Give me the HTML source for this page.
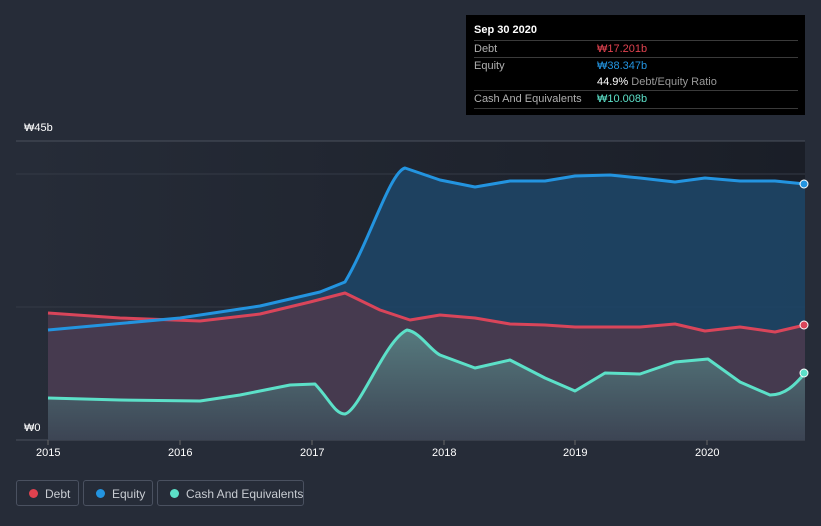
<!DOCTYPE html><html><head><meta charset="utf-8"><style>
html,body{margin:0;width:821px;height:526px;overflow:hidden}
body{background:#262c38;font-family:"Liberation Sans","Noto Sans CJK KR",sans-serif;position:relative}
.t{position:absolute;color:#fff;font-size:11px;white-space:nowrap}
.tip{position:absolute;left:466px;top:15px;width:339px;height:100px;background:#000}
.row{position:absolute;left:8px;width:324px;border-top:1px solid #3a3a3a;font-size:11px;color:#b0b0b0;white-space:nowrap}
.lg{position:absolute;top:480px;height:26px;border:1px solid #4a5160;border-radius:3px;color:#c8ccd2;font-size:12px;line-height:26px;box-sizing:border-box;white-space:nowrap}
.lg i{position:absolute;left:12px;top:8px;width:9px;height:9px;border-radius:50%}
</style></head><body>
<svg width="821" height="526" style="position:absolute;left:0;top:0">
<defs>
<linearGradient id="bgG" x1="0" x2="1" y1="0" y2="0"><stop offset="0" stop-color="#262c38"/><stop offset="1" stop-color="#1a1e27"/></linearGradient>
<linearGradient id="cG" x1="0" x2="0" y1="0" y2="1"><stop offset="0" stop-color="#5a8a8a" stop-opacity=".8"/><stop offset="1" stop-color="#3a4755" stop-opacity=".8"/></linearGradient>
</defs>
<rect x="16" y="141" width="789" height="299" fill="url(#bgG)"/>
<line x1="16" y1="141" x2="805" y2="141" stroke="#4a505c"/>
<line x1="16" y1="174" x2="805" y2="174" stroke="#343a46"/>
<line x1="16" y1="307" x2="805" y2="307" stroke="#343a46"/>
<line x1="16" y1="440" x2="805" y2="440" stroke="#4a505c"/>
<path d="M48,330 L180,318 L260,306 L320,292 L345,282 C370,240 390,172 405,168 L440,180 L475,187 L510,181 L545,181 L575,176 L610,175 L640,178 L675,182 L705,178 L740,181 L775,181 L805,184 L805,440 L48,440Z" fill="#1e4566" opacity=".9"/>
<path d="M48,313 L120,318 L200,321 L260,314 L310,302 L345,293 L380,310 L410,320 L440,315 L475,318 L510,324 L545,325 L575,327 L610,327 L640,327 L675,324 L705,331 L740,327 L775,332 L805,325 L805,440 L48,440Z" fill="#4a3a4e" opacity=".9"/>
<path d="M48,398 L120,400 L200,401 L240,395 L290,385 L315,384 C330,400 335,414 345,414 C360,410 385,340 407,330 C420,332 430,350 440,355 L475,368 L510,360 L545,378 L575,391 L605,373 L640,374 L675,362 L708,359 L740,382 L770,395 C785,395 795,385 805,373 L805,440 L48,440Z" fill="url(#cG)"/>
<g fill="none" stroke-width="3" stroke-linejoin="round">
<path d="M48,313 L120,318 L200,321 L260,314 L310,302 L345,293 L380,310 L410,320 L440,315 L475,318 L510,324 L545,325 L575,327 L610,327 L640,327 L675,324 L705,331 L740,327 L775,332 L805,325" stroke="#d9455a"/>
<path d="M48,330 L180,318 L260,306 L320,292 L345,282 C370,240 390,172 405,168 L440,180 L475,187 L510,181 L545,181 L575,176 L610,175 L640,178 L675,182 L705,178 L740,181 L775,181 L805,184" stroke="#2394e0"/>
<path d="M48,398 L120,400 L200,401 L240,395 L290,385 L315,384 C330,400 335,414 345,414 C360,410 385,340 407,330 C420,332 430,350 440,355 L475,368 L510,360 L545,378 L575,391 L605,373 L640,374 L675,362 L708,359 L740,382 L770,395 C785,395 795,385 805,373" stroke="#5ce0c8"/>
</g>
<circle cx="804" cy="184" r="4" fill="#2394e0" stroke="#fff"/>
<circle cx="804" cy="325" r="4" fill="#d9455a" stroke="#fff"/>
<circle cx="804" cy="373" r="4" fill="#5ce0c8" stroke="#fff"/>
<g stroke="#666"><line x1="48" y1="440" x2="48" y2="445"/><line x1="180" y1="440" x2="180" y2="445"/><line x1="312" y1="440" x2="312" y2="445"/><line x1="444" y1="440" x2="444" y2="445"/><line x1="575" y1="440" x2="575" y2="445"/><line x1="707" y1="440" x2="707" y2="445"/></g>
</svg>
<div class="t" style="left:24px;top:122px">₩45b</div>
<div class="t" style="left:24px;top:422px">₩0</div>
<div class="t" style="left:36px;top:447px">2015</div>
<div class="t" style="left:168px;top:447px">2016</div>
<div class="t" style="left:300px;top:447px">2017</div>
<div class="t" style="left:432px;top:447px">2018</div>
<div class="t" style="left:563px;top:447px">2019</div>
<div class="t" style="left:695px;top:447px">2020</div>
<div class="tip">
<div style="position:absolute;left:8px;top:9px;color:#fff;font-weight:bold;font-size:11px">Sep 30 2020</div>
<div class="row" style="top:25px;height:16px;line-height:16px">Debt<span style="position:absolute;left:123px;color:#e0424f">₩17.201b</span></div>
<div class="row" style="top:42px;height:33px;line-height:16px">Equity<span style="position:absolute;left:123px;color:#2394e0">₩38.347b</span><span style="position:absolute;left:123px;top:16px;color:#999"><b style="color:#fff;font-weight:normal">44.9%</b> Debt/Equity Ratio</span></div>
<div class="row" style="top:75px;height:17px;line-height:16px;border-bottom:1px solid #3a3a3a">Cash And Equivalents<span style="position:absolute;left:123px;color:#5ce0c8">₩10.008b</span></div>
</div>
<div class="lg" style="left:16px;width:63px"><i style="background:#e0424f"></i><span style="position:absolute;left:28px">Debt</span></div>
<div class="lg" style="left:83px;width:70px"><i style="background:#2394e0"></i><span style="position:absolute;left:28px">Equity</span></div>
<div class="lg" style="left:157px;width:147px"><i style="background:#5ce0c8"></i><span style="position:absolute;left:28px">Cash And Equivalents</span></div>
</body></html>
